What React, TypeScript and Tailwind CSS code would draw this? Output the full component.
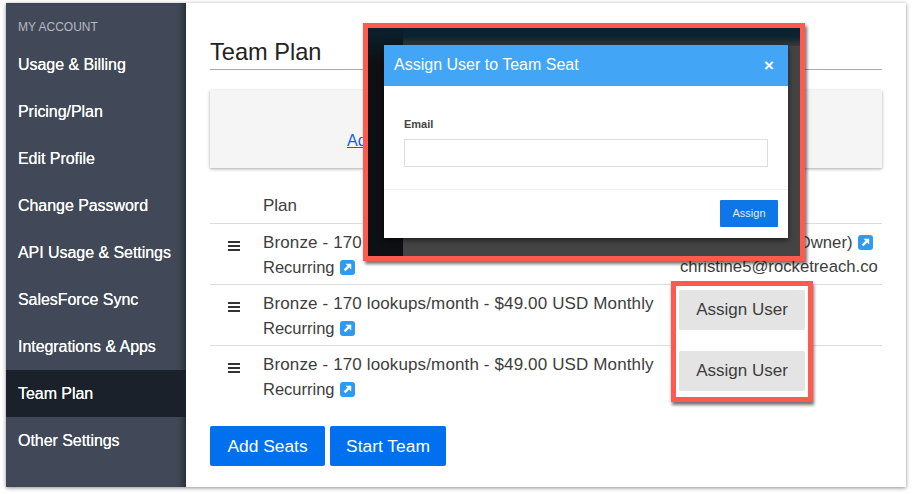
const menuItems = [
  'Usage & Billing',
  'Pricing/Plan',
  'Edit Profile',
  'Change Password',
  'API Usage & Settings',
  'SalesForce Sync',
  'Integrations & Apps',
  'Team Plan',
  'Other Settings',
];

function DragHandle() {
  return (
    <svg width="12" height="10" viewBox="0 0 12 10" className="shrink-0 fill-[#333]">
      <rect x="0" y="0" width="12" height="2" />
      <rect x="0" y="4" width="12" height="2" />
      <rect x="0" y="8" width="12" height="2" />
    </svg>
  );
}

function LinkIcon() {
  return (
    <svg width="15" height="15" viewBox="0 0 15 15" className="ml-[5px] inline-block align-[-2px]">
      <rect width="15" height="15" rx="3" fill="#2f9bf0" />
      <path d="M5.5 3.8H11.2V9.5L9.2 7.5L5.4 11.3L3.7 9.6L7.5 5.8Z" fill="#fff" />
    </svg>
  );
}

function PlanRow({ children }: { children?: React.ReactNode }) {
  return (
    <div className="flex h-[61px] border-t border-[#ddd]">
      <div className="w-[53px] pt-[17px] pl-[18px]">
        <DragHandle />
      </div>
      <div className="w-[417px] pt-[7px] leading-[24px]">
        <span className="tracking-[0.13px]">Bronze - 170 lookups/month - $49.00 USD Monthly</span>
        <br />
        <span className="text-[16.5px]">Recurring</span>
        <LinkIcon />
      </div>
      <div className="pt-[7px] text-[16.7px] leading-[24px] whitespace-nowrap">{children}</div>
    </div>
  );
}

export default function App() {
  return (
    <div className="h-[494px] w-[913px] bg-white pt-[3px] pl-[6px] font-['Liberation_Sans',Arial,sans-serif] text-[#333]">
      <div className="relative flex h-[484px] w-[900px] bg-white shadow-[0_1px_4px_rgba(0,0,0,0.45)]">
        <aside className="h-full w-[180px] shrink-0 bg-[#414958] pt-[17px] text-white shadow-[inset_-7px_0_6px_-4px_rgba(0,0,0,0.4)]">
          <div className="h-[21px] pl-[12px] text-[12px] leading-[15px] text-[#b5b9c0]">MY ACCOUNT</div>
          {menuItems.map((item) => (
            <div
              key={item}
              className={`flex h-[47px] items-center pl-[12px] text-[16px] font-medium tracking-[-0.05px] [text-shadow:0_0_0.4px_#fff] ${
                item === 'Team Plan' ? 'bg-[#1a212b]' : ''
              }`}
            >
              {item}
            </div>
          ))}
        </aside>

        <main className="w-[696px] pl-[24px] text-[#3d3d3d]">
          <h1 className="mt-[34px] box-content h-[32px] border-b border-[#aaa] text-[23.6px] leading-[30px] font-normal text-[#222]">
            Team Plan
          </h1>
          <div className="mt-[20px] h-[78px] w-[672px] bg-[#f5f5f5] pt-[40px] pl-[137px] text-[16px] leading-[22px] shadow-[0_1px_3px_rgba(0,0,0,0.35)]">
            <a className="text-[#0b5fff] underline">Add more team members</a>
          </div>
          <div className="mt-[24px] w-[672px] text-[17px]">
            <div className="h-[31px] pl-[53px] leading-[28px]">Plan</div>
            <PlanRow>
              Christine Leon (Owner)
              <LinkIcon />
              <br />
              christine5@rocketreach.co
            </PlanRow>
            <PlanRow />
            <PlanRow />
          </div>
          <div className="mt-[20px] flex gap-[5px] text-[17.4px] text-white">
            <button className="h-[40px] w-[115px] rounded-[2px] bg-[#0070ee]">Add Seats</button>
            <button className="h-[40px] w-[116px] rounded-[2px] bg-[#0070ee]">Start Team</button>
          </div>
        </main>

        {/* annotation over the modal */}
        <div className="absolute top-[20px] left-[357px] h-[238px] w-[442px] overflow-hidden border-[5px] border-[#ff5a4d] bg-[#444] shadow-[2px_3px_3px_rgba(0,0,0,0.55)]">
          <div className="absolute inset-x-0 top-0 h-[18px] bg-gradient-to-b from-[#08222f] via-[#0c2430] to-[#3a3a3a]" />
          <div className="absolute inset-y-0 left-0 w-[35px] bg-gradient-to-b from-[#08222f] via-[#0e1014] via-[15%] to-[#0e1014] blur-[0.5px]" />
          <div className="absolute top-[17px] left-[16px] h-[193px] w-[404px] bg-white shadow-[0_2px_6px_rgba(0,0,0,0.6)]">
            <div className="flex h-[41px] items-center justify-between bg-[#42a5f5] pr-[14px] pl-[10px] text-white">
              <span className="mb-[1px] text-[16px]">Assign User to Team Seat</span>
              <span className="text-[17px] font-bold">×</span>
            </div>
            <div className="h-[104px] border-b border-[#eee] pt-[32px] pl-[20px]">
              <div className="text-[11px] leading-[13px] font-bold text-[#444]">Email</div>
              <div className="mt-[8px] h-[28px] w-[364px] border border-[#ddd] bg-white" />
            </div>
            <div className="flex justify-end pt-[10px] pr-[10px]">
              <button className="h-[27px] w-[58px] rounded-[1px] bg-[#0f76e8] text-[11px] text-[#dfeeff]">Assign</button>
            </div>
          </div>
        </div>

        {/* annotation over the assign buttons */}
        <div className="absolute top-[278px] left-[665px] flex h-[121px] w-[142px] flex-col gap-[21px] border-[5px] border-[#ff5a4d] bg-white px-[3px] pt-[4px] shadow-[1px_3px_3px_rgba(0,0,0,0.55)]">
          {[0, 1].map((n) => (
            <button key={n} className="h-[40px] w-[126px] shrink-0 rounded-[2px] bg-[#e4e4e4] text-[17px] text-[#3d3d3d]">
              Assign User
            </button>
          ))}
        </div>
      </div>
    </div>
  );
}
